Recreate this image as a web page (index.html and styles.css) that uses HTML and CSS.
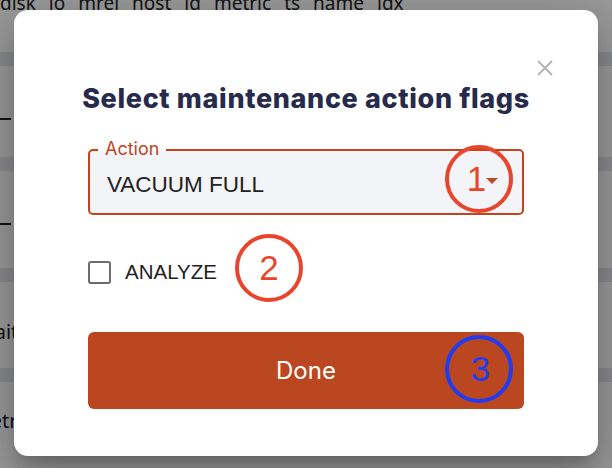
FILE: index.html
```html
<!DOCTYPE html>
<html>
<head>
<meta charset="utf-8">
<link rel="stylesheet" href="styles.css">
</head>
<body>
<div class="page">
  <div class="hdr">
    <span>disk</span><span>io</span><span>mrel</span><span>host</span><span>id</span><span>metric</span><span>ts</span><span>name</span><span>idx</span>
  </div>
  <div class="band"></div>
  <div class="row r1"><span class="dash"></span></div>
  <div class="band"></div>
  <div class="row r2"><span class="dash"></span></div>
  <div class="band"></div>
  <div class="row r3"><span class="cut">wait</span></div>
  <div class="band"></div>
  <div class="row r4"><span class="cut">metr</span></div>
</div>
<div class="backdrop"></div>
<div class="dialog">
  <svg class="close" width="16" height="16" viewBox="0 0 16 16"><path d="M1 1L15 15M15 1L1 15" stroke="#b3b3b3" stroke-width="1.8" fill="none"/></svg>
  <h2 class="title">Select maintenance action flags</h2>
  <div class="field">
    <span class="label">Action</span>
    <span class="value">VACUUM FULL</span>
    <span class="arrow"></span>
  </div>
  <div class="check-row">
    <span class="box"></span>
    <span class="check-label">ANALYZE</span>
  </div>
  <div class="done">Done</div>
  <div class="mark red m1">1</div>
  <div class="mark red m2">2</div>
  <div class="mark blue m3">3</div>
</div>
</body>
</html>
```
FILE: styles.css
```css
html, body {
  margin: 0;
  padding: 0;
  width: 612px;
  height: 468px;
  overflow: hidden;
  background: #fff;
}
.page {
  display: flex;
  flex-direction: column;
  font-family: "Noto Sans", sans-serif;
  color: #222;
}
.hdr {
  display: flex;
  gap: 13px;
  font-size: 19px;
  line-height: 20px;
  margin-top: -7px;
  height: 59px;
  align-items: flex-start;
}
.band {
  height: 14px;
  background: #e4e6ec;
}
.row {
  position: relative;
}
.r1 { height: 91px; }
.r2 { height: 97px; }
.r3 { height: 86px; }
.r4 { height: 100px; }
.dash {
  display: block;
  width: 11px;
  height: 2px;
  background: #222;
  margin-top: 52px;
}
.cut {
  display: block;
  margin-left: -21px;
  font-size: 20px;
  line-height: 20px;
  margin-top: 40px;
}
.r4 .cut { margin-left: -28px; margin-top: 29px; }
.backdrop {
  position: absolute;
  inset: 0;
  background: rgba(0, 0, 0, 0.4);
}
.dialog {
  position: absolute;
  left: 14px;
  top: 10px;
  width: 584px;
  height: 446px;
  box-sizing: border-box;
  padding: 73px 74px 0;
  background: #fff;
  border-radius: 14px;
  box-shadow: 0 11px 15px -7px rgba(0,0,0,0.2), 0 24px 38px 3px rgba(0,0,0,0.14), 0 9px 46px 8px rgba(0,0,0,0.12);
  font-family: "Liberation Sans", Arial, sans-serif;
}
.close {
  position: absolute;
  right: 45px;
  top: 50px;
}
.title {
  margin: 0 -20px;
  font-family: Inter, sans-serif;
  font-weight: 800;
  font-size: 27px;
  line-height: 32px;
  color: #272a4b;
  text-align: center;
  letter-spacing: 0.65px;
}
.field {
  position: relative;
  margin-top: 34px;
  height: 66px;
  box-sizing: border-box;
  border: 2px solid #c0451f;
  border-radius: 5px;
  background: #f2f4f8;
  display: flex;
  align-items: center;
  padding: 6px 16px 0 17px;
}
.label {
  position: absolute;
  left: 8px;
  top: -12px;
  padding: 0 7px;
  font-family: Inter, sans-serif;
  font-size: 18px;
  line-height: 20px;
  color: #c0451f;
  background: linear-gradient(#fff 12px, #f2f4f8 12px);
}
.value {
  flex: 1;
  font-size: 22.5px;
  color: #222;
}
.arrow {
  width: 0;
  height: 0;
  border-left: 6px solid transparent;
  border-right: 6px solid transparent;
  border-top: 6px solid #b84a28;
  margin-right: 8px;
  margin-top: -8px;
}
.check-row {
  display: flex;
  align-items: center;
  margin-top: 45px;
  height: 24px;
}
.box {
  width: 23px;
  height: 23px;
  box-sizing: border-box;
  border: 2px solid #6b6b6b;
  border-radius: 3px;
}
.check-label {
  margin-left: 14px;
  font-size: 20.5px;
  color: #222;
}
.done {
  margin-top: 48px;
  height: 77px;
  background: #bb4720;
  border-radius: 6px;
  display: flex;
  align-items: center;
  justify-content: center;
  color: #fff;
  font-family: Inter, sans-serif;
  font-weight: 400;
  font-size: 24px;
}
.mark {
  position: absolute;
  width: 68px;
  height: 68px;
  box-sizing: border-box;
  border-radius: 50%;
  border: 4px solid;
  display: flex;
  align-items: center;
  justify-content: center;
  font-family: "Liberation Sans", Arial, sans-serif;
  font-size: 35px;
}
.red { color: #e8452c; border-color: #e8452c; }
.blue { color: #1f3cf0; border-color: #1f3cf0; }
.m1 { left: 431px; top: 135px; padding-right: 5px; }
.m2 { left: 221px; top: 224px; }
.m3 { left: 431px; top: 325px; padding-left: 3px; }
```
